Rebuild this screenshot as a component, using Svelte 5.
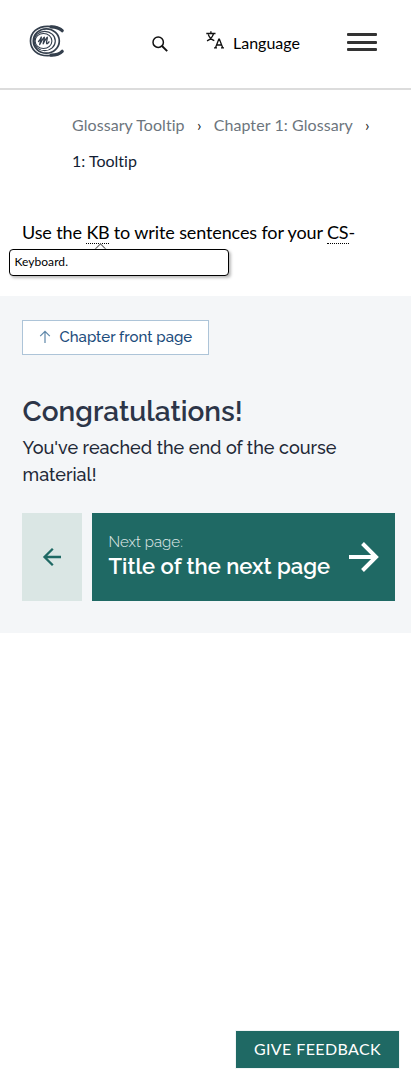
<script>
  const crumbs = ['Glossary Tooltip', 'Chapter 1: Glossary'];
</script>

<div class="page">
  <header>
    <svg class="logo" viewBox="0 0 36 34" width="36" height="34" fill="none" stroke="#343f4d">
      <path d="M33.400 6.500C29.500 2.500 24 2.300 18.500 2.300C8.500 2.300 1.500 8.500 1.500 17C1.500 25.500 8.500 31.700 18.500 31.700C25 31.700 30 31 33.400 27.500" stroke-width="1.700" stroke-linecap="round" />
      <path d="M33.200 6.700C30.500 3.900 27 3 22 2.900M33.200 27.300C30.500 30.100 27 31 22 31.100" stroke-width="3.200" stroke-linecap="round" />
      <ellipse cx="17.300" cy="17" rx="13" ry="12.200" stroke-width="1.700" />
      <ellipse cx="15.700" cy="17" rx="10.600" ry="9.700" stroke-width="1.200" />
      <ellipse cx="14.500" cy="17" rx="8.400" ry="7.500" stroke-width="1.100" />
      <path d="M9.500 17.500C11 16 12 14 12.300 13C12.500 15 11 18.500 10.700 20.500C12 18 14 14.500 15.300 13.200C15.600 15 14.500 17.500 14.200 19.800C15.500 17 17 14.200 18.300 13.200C18.700 14.500 17 18 17.600 19.500C18.200 20.200 19.200 19 20 17.800" stroke-width="1.300" stroke-linecap="round" stroke-linejoin="round" />
    </svg>
    <svg class="search" viewBox="0 0 18 18" width="18" height="18" fill="none" stroke="#111">
      <circle cx="7.200" cy="7.200" r="5.200" stroke-width="1.500" />
      <path d="M11 11L16.200 16.200" stroke-width="1.900" />
    </svg>
    <div class="language">
      <svg viewBox="0 0 18 20" width="18" height="20" fill="none" stroke="#111" stroke-width="1.300">
        <path d="M.3 3.500H9.500M4.900 1.200V3.500M2.300 4.500C3.300 7.300 5.600 9.600 8.300 10.700M7.500 3.800C6.600 7 4.200 9.500 1 10.900" />
        <path d="M9.500 17.800L12.800 9.200H13.400L16.700 17.800M10.500 15H15.700M8 17.900H11M15 17.900H18" />
      </svg>
      <span>Language</span>
    </div>
    <div class="burger"><i></i><i></i><i></i></div>
  </header>

  <nav>
    {#each crumbs as crumb}
      <a href="#top">{crumb}</a><b>›</b>
    {/each}
    <span>1: Tooltip</span>
  </nav>

  <main>
    <p>Use the <span class="term">KB<span class="tip">Keyboard.</span></span> to write sentences for your <span class="term">CS</span>-</p>
  </main>

  <section>
    <a class="front" href="#top">
      <svg viewBox="0 0 12 14" width="12" height="14" fill="none" stroke="#5f88aa" stroke-width="1.200"><path d="M6 13V1.500M1.200 6.200L6 1.400L10.800 6.200" /></svg>
      <span>Chapter front page</span>
    </a>
    <h2>Congratulations!</h2>
    <p class="done">You've reached the end of the course<br />material!</p>
    <div class="pager">
      <a class="prev" href="#top" aria-label="Previous page">
        <svg viewBox="0 0 20 20" width="20" height="20" fill="none" stroke="#1f6964" stroke-width="2.300"><path d="M19 10H2.500M10.800 1.700L2.500 10L10.800 18.300" /></svg>
      </a>
      <a class="next" href="#top">
        <span class="labels"><small>Next page:</small><strong>Title of the next page</strong></span>
        <svg viewBox="0 0 32 32" width="32" height="32" fill="none" stroke="#fff" stroke-width="4"><path d="M1 16H28M14.500 2.500L28 16L14.500 29.500" /></svg>
      </a>
    </div>
  </section>

  <button>GIVE FEEDBACK</button>
</div>

<style>
  :global(body) { background: #fff; }
  * { box-sizing: border-box; }
  .page { height: 1080px; display: flex; flex-direction: column; font-family: Lato, sans-serif; font-variant-ligatures: none; color: #000; }
  a { text-decoration: none; }
  svg { display: block; flex: none; }
  header { height: 90px; flex: none; display: flex; align-items: flex-start; border-bottom: 2px solid #dcdcdc; padding-left: 29px; }
  .logo { margin-top: 24px; }
  .search { margin: 35px 0 0 86px; }
  .language { display: flex; margin: 30px 0 0 37px; font-size: 16px; line-height: 26px; width: 141px; gap: 9px; }
  .burger { margin-top: 33px; display: flex; flex-direction: column; width: 30px; }
  .burger i { height: 3px; background: #333; border-radius: 1px; margin-bottom: 5px; }
  .burger i:nth-child(2) { margin-bottom: 4px; }
  nav { height: 110px; flex: none; padding: 17px 0 0 72px; display: flex; flex-wrap: wrap; align-content: flex-start; font-size: 16px; line-height: 36px; }
  nav a { color: #6c757d; letter-spacing: .07px; }
  nav b { font-weight: 400; width: 29px; text-align: center; color: #222; }
  nav span { color: #121d33; }
  main { height: 96px; flex: none; padding: 18px 22px 0; font-size: 18px; line-height: 28px; letter-spacing: -.12px; }
  p { margin: 0; }
  .term { position: relative; display: inline-block; height: 26px; line-height: 28px; border-bottom: 1px dotted #000; vertical-align: top; }
  .term:first-child { letter-spacing: -.3px; }
  .tip { position: absolute; z-index: 2; top: 31px; left: -77px; width: 220px; height: 27px; border: 1px solid #000; border-radius: 4px; background: #fff; box-shadow: 2px 2px 3px #0004; font-size: 12px; line-height: 24px; padding-left: 4px; letter-spacing: .07px; }
  .tip::before { content: ''; position: absolute; width: 8px; height: 8px; left: 86px; top: -5px; border: solid #555; border-width: 1px 0 0 1px; background: #fff; transform: rotate(45deg); clip-path: polygon(-10% -10%, 100% -10%, -10% 100%); }
  section { height: 337px; flex: none; background: #f4f6f8; padding: 24px 16px 0 22px; font-family: Raleway, Lato, sans-serif; }
  .front { display: flex; align-items: center; width: 187px; height: 35px; background: #fff; border: 1px solid #adc4d8; padding-left: 16px; gap: 8.500px; color: #1c4c7c; font-size: 15px; line-height: 33px; font-weight: 500; white-space: nowrap; }
  .front svg { margin-top: -2px; }
  h2 { margin: 39px 0 0 .6px; font-size: 28px; line-height: 36px; font-weight: 600; color: #2c3548; }
  .done { margin: 4px 0 0 .5px; font-size: 18px; line-height: 27px; font-weight: 500; color: #1f2937; }
  .pager { margin-top: 25px; display: flex; gap: 10px; }
  .prev { width: 60px; height: 88px; display: flex; align-items: center; justify-content: center; background: #dae6e4; }
  .next { flex: 1; height: 88px; display: flex; align-items: center; justify-content: space-between; background: #1f6964; color: #fff; padding: 0 15px 0 16.500px; white-space: nowrap; }
  .labels { display: flex; flex-direction: column; margin-top: -2px; }
  small { font-size: 15px; line-height: 20px; font-weight: 300; letter-spacing: .05px; color: #e3edec; }
  strong { font-size: 22px; line-height: 29px; font-weight: 600; }
  button { margin: auto 12px 12px auto; width: 163px; height: 37px; padding: 0 0 2px; border: 0; background: #1f6964; color: #fff; font: 16px/35px Lato, sans-serif; letter-spacing: .4px; box-shadow: 0 0 0 1px #f1f4f5; }
</style>
